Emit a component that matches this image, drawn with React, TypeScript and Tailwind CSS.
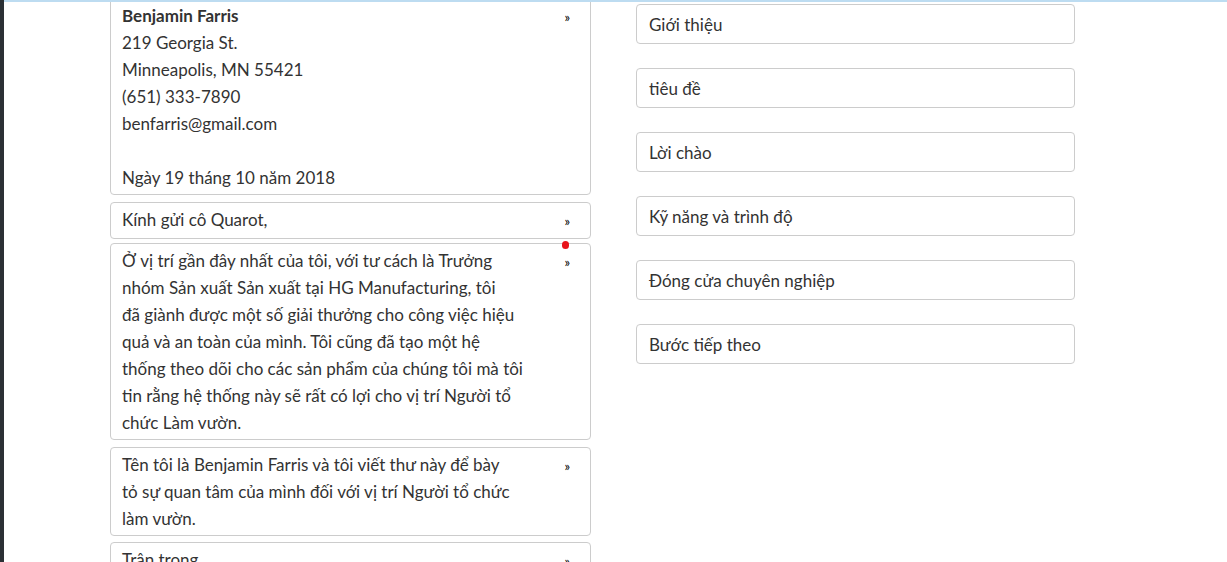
import React from "react";

function Card({ lines, bold }: { lines: string[]; bold?: number }) {
  return (
    <div className="flex items-start rounded-[4px] border border-[#cccccc] bg-white py-[3px] pl-[11px] pr-[20px]">
      <div className="w-[430px] shrink-0 whitespace-nowrap leading-[27px]">
        {lines.map((l, i) => (
          <div key={i} className={bold === i ? "font-bold" : ""}>
            {l === "" ? "\u00a0" : l}
          </div>
        ))}
      </div>
      <div className="flex-1" />
      <span className="pt-[2px] text-[13px] leading-[27px] text-black">»</span>
    </div>
  );
}

export default function App() {
  const right = [
    "Giới thiệu",
    "tiêu đề",
    "Lời chào",
    "Kỹ năng và trình độ",
    "Đóng cửa chuyên nghiệp",
    "Bước tiếp theo",
  ];
  return (
    <div
      className="relative flex h-[562px] w-[1227px] overflow-hidden bg-white text-[17px] text-[#333333]"
      style={{ fontFamily: "Lato, 'Noto Sans', sans-serif" }}
    >
      <div className="w-[4px] shrink-0 bg-[#2b3035]" />
      <div className="relative flex-1">
        <div className="absolute left-0 right-0 top-0 z-10 h-[2px] bg-[#bddcf1]" />
        <div className="flex pl-[106px]">
          <div className="mt-[-2px] flex w-[481px] shrink-0 flex-col gap-[6px]">
            <Card
              bold={0}
              lines={[
                "Benjamin Farris",
                "219 Georgia St.",
                "Minneapolis, MN 55421",
                "(651) 333-7890",
                "benfarris@gmail.com",
                "",
                "Ngày 19 tháng 10 năm 2018",
              ]}
            />
            <div className="mt-[1px]">
              <Card lines={["Kính gửi cô Quarot,"]} />
            </div>
            <div className="relative mt-[-2px]">
              <div className="absolute left-[452px] top-[-2px] z-10 h-[8px] w-[7px] rounded-full bg-[#e8141b]" />
              <Card
                lines={[
                  "Ở vị trí gần đây nhất của tôi, với tư cách là Trưởng",
                  "nhóm Sản xuất Sản xuất tại HG Manufacturing, tôi",
                  "đã giành được một số giải thưởng cho công việc hiệu",
                  "quả và an toàn của mình. Tôi cũng đã tạo một hệ",
                  "thống theo dõi cho các sản phẩm của chúng tôi mà tôi",
                  "tin rằng hệ thống này sẽ rất có lợi cho vị trí Người tổ",
                  "chức Làm vườn.",
                ]}
              />
            </div>
            <div className="mt-[1px]">
              <Card
                lines={[
                  "Tên tôi là Benjamin Farris và tôi viết thư này để bày",
                  "tỏ sự quan tâm của mình đối với vị trí Người tổ chức",
                  "làm vườn.",
                ]}
              />
            </div>
            <Card lines={["Trân trọng,"]} />
          </div>
          <div className="ml-[45px] mt-[4px] flex w-[439px] shrink-0 flex-col gap-[24px]">
            {right.map((t) => (
              <div
                key={t}
                className="h-[40px] rounded-[4px] border border-[#cccccc] bg-white px-[12px] leading-[39px]"
              >
                {t}
              </div>
            ))}
          </div>
        </div>
      </div>
    </div>
  );
}
